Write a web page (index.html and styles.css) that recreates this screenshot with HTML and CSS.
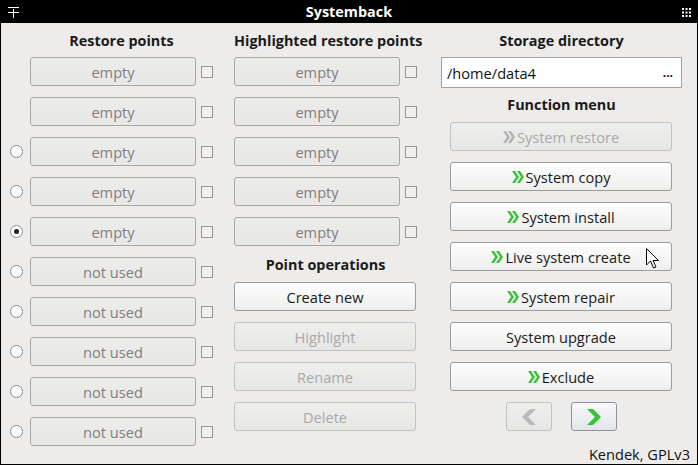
FILE: index.html
```html
<!DOCTYPE html>
<html>
<head>
<meta charset="utf-8">
<link rel="stylesheet" href="styles.css">
</head>
<body>
<div class="window">
  <div class="titlebar">
    <svg class="tb-left" width="11" height="11" viewBox="0 0 11 11"><path d="M0 0.5H11M0 5.5H11M5.5 2V11" stroke="#fff" stroke-width="1"/></svg>
    <span class="title">Systemback</span>
    <svg class="tb-right" width="9" height="9" viewBox="0 0 9 9" fill="#fff"><rect x="0" y="0" width="2" height="2"/><rect x="3.5" y="0" width="2" height="2"/><rect x="7" y="0" width="2" height="2"/><rect x="0" y="3.5" width="2" height="2"/><rect x="3.5" y="3.5" width="2" height="2"/><rect x="7" y="3.5" width="2" height="2"/><rect x="0" y="7" width="2" height="2"/><rect x="3.5" y="7" width="2" height="2"/><rect x="7" y="7" width="2" height="2"/></svg>
  </div>
  <div class="content">
    <div class="col col-left">
      <div class="heading h-left">Restore points</div>
      <div class="rows">
        <div class="row"><span class="radio hidden"></span><div class="field">empty</div><span class="check"></span></div>
        <div class="row"><span class="radio hidden"></span><div class="field">empty</div><span class="check"></span></div>
        <div class="row"><span class="radio"></span><div class="field">empty</div><span class="check"></span></div>
        <div class="row"><span class="radio"></span><div class="field">empty</div><span class="check"></span></div>
        <div class="row"><span class="radio checked"></span><div class="field">empty</div><span class="check"></span></div>
        <div class="row"><span class="radio"></span><div class="field">not used</div><span class="check"></span></div>
        <div class="row"><span class="radio"></span><div class="field">not used</div><span class="check"></span></div>
        <div class="row"><span class="radio"></span><div class="field">not used</div><span class="check"></span></div>
        <div class="row"><span class="radio"></span><div class="field">not used</div><span class="check"></span></div>
        <div class="row"><span class="radio"></span><div class="field">not used</div><span class="check"></span></div>
      </div>
    </div>
    <div class="col col-mid">
      <div class="heading h-mid">Highlighted restore points</div>
      <div class="rows">
        <div class="row"><div class="field">empty</div><span class="check"></span></div>
        <div class="row"><div class="field">empty</div><span class="check"></span></div>
        <div class="row"><div class="field">empty</div><span class="check"></span></div>
        <div class="row"><div class="field">empty</div><span class="check"></span></div>
        <div class="row"><div class="field">empty</div><span class="check"></span></div>
      </div>
      <div class="heading h-mid h-ops">Point operations</div>
      <div class="rows">
        <div class="btn op">Create new</div>
        <div class="btn op disabled">Highlight</div>
        <div class="btn op disabled">Rename</div>
        <div class="btn op disabled">Delete</div>
      </div>
    </div>
    <div class="col col-right">
      <div class="heading h-right">Storage directory</div>
      <div class="dir"><span>/home/data4</span><span class="dots">...</span></div>
      <div class="heading h-right h-func">Function menu</div>
      <div class="rows">
        <div class="btn fn disabled"><svg class="chev" width="12" height="12" viewBox="0 0 12 12"><path d="M0 0H3L7 6L3 12H0L4 6Z M5 0H8L12 6L8 12H5L9 6Z" fill="#b4b4b4"/></svg>System restore</div>
        <div class="btn fn"><svg class="chev" width="12" height="12" viewBox="0 0 12 12"><path d="M0 0H3L7 6L3 12H0L4 6Z M5 0H8L12 6L8 12H5L9 6Z" fill="#3cc13c"/></svg>System copy</div>
        <div class="btn fn"><svg class="chev" width="12" height="12" viewBox="0 0 12 12"><path d="M0 0H3L7 6L3 12H0L4 6Z M5 0H8L12 6L8 12H5L9 6Z" fill="#3cc13c"/></svg>System install</div>
        <div class="btn fn"><svg class="chev" width="12" height="12" viewBox="0 0 12 12"><path d="M0 0H3L7 6L3 12H0L4 6Z M5 0H8L12 6L8 12H5L9 6Z" fill="#3cc13c"/></svg>Live system create</div>
        <div class="btn fn"><svg class="chev" width="12" height="12" viewBox="0 0 12 12"><path d="M0 0H3L7 6L3 12H0L4 6Z M5 0H8L12 6L8 12H5L9 6Z" fill="#3cc13c"/></svg>System repair</div>
        <div class="btn fn">System upgrade</div>
        <div class="btn fn"><svg class="chev" width="12" height="12" viewBox="0 0 12 12"><path d="M0 0H3L7 6L3 12H0L4 6Z M5 0H8L12 6L8 12H5L9 6Z" fill="#3cc13c"/></svg>Exclude</div>
        <div class="nav">
          <div class="btn navbtn disabled"><svg width="14" height="16" viewBox="0 0 14 16"><path d="M14 0H8L0 8L8 16H14L6 8Z" fill="#b9b9b9"/></svg></div>
          <div class="btn navbtn fwd"><svg width="14" height="16" viewBox="0 0 14 16"><path d="M0 0H6L14 8L6 16H0L8 8Z" fill="#33c433"/></svg></div>
        </div>
      </div>
      <div class="footer">Kendek, GPLv3</div>
    </div>
  </div>
  <svg class="cursor" width="13" height="21" viewBox="0 0 13 21"><path d="M0.5 0.5V17L4.5 13L7.5 20L10 19L7 12.5H12.5Z" fill="#fff" stroke="#000" stroke-width="1" stroke-linejoin="round"/></svg>
</div>
</body>
</html>
```

FILE: styles.css
```css
* { box-sizing: border-box; }
html, body { margin: 0; padding: 0; }
body {
  width: 698px;
  height: 465px;
  overflow: hidden;
  font-family: "Open Sans", "Liberation Sans", sans-serif;
  font-size: 14.6px;
  color: #1a1a1a;
  background: #edeceb;
}
.window {
  position: relative;
  width: 698px;
  height: 465px;
  border: 1px solid #000;
  border-top: 0;
  background: #edeceb;
}
.titlebar {
  position: relative;
  height: 23px;
  margin: 0 -1px;
  background: #000;
  color: #fff;
  display: flex;
  align-items: center;
  justify-content: center;
}
.title { font-weight: bold; font-size: 14.4px; }
.tb-left { position: absolute; left: 8px; top: 7px; }
.tb-right { position: absolute; right: 7px; top: 8px; }
.content {
  display: flex;
  padding-top: 8px;
}
.col { display: flex; flex-direction: column; }
.col-left { width: 217px; }
.col-mid { width: 212px; padding-left: 16px; }
.col-right { width: 267px; }
.heading {
  height: 20px;
  line-height: 20px;
  font-weight: bold;
  font-size: 14.4px;
  text-align: center;
  white-space: nowrap;
  margin-bottom: 6px;
}
.h-left { margin-left: 29px; width: 183px; }
.h-mid { width: 183px; }
.h-ops { margin-top: 9px; margin-bottom: 7px; }
.h-right { margin-left: 11px; width: 241px; }
.h-func { margin-top: 7px; margin-bottom: 7px; }
.rows { display: flex; flex-direction: column; gap: 11px; }
.row { display: flex; align-items: center; height: 29px; }
.radio {
  width: 13px;
  height: 13px;
  margin-left: 9px;
  margin-right: 7px;
  border: 1px solid #8c8c8c;
  border-radius: 50%;
  background: #fff;
  display: flex;
  align-items: center;
  justify-content: center;
}
.radio.hidden { visibility: hidden; }
.radio.checked::after {
  content: "";
  width: 5px;
  height: 5px;
  border-radius: 50%;
  background: #222;
}
.field {
  width: 166px;
  height: 29px;
  border: 1px solid #a6a6a6;
  border-radius: 3px;
  background: linear-gradient(#ececeb, #e8e7e6);
  color: #7e7e7e;
  text-align: center;
  line-height: 27px;
  padding-top: 1px;
}
.check {
  width: 12px;
  height: 12px;
  margin-left: 5px;
  border: 1px solid #969696;
  background: #f1f0ef;
}
.btn {
  height: 29px;
  border: 1px solid #9d9d9d;
  border-radius: 3px;
  background: linear-gradient(#fefefe, #eeeeed);
  display: flex;
  align-items: center;
  justify-content: center;
  color: #1a1a1a;
  white-space: nowrap;
}
.btn.disabled {
  border-color: #c2c2c2;
  background: linear-gradient(#eeeeed, #e6e6e5);
  color: #a9a9a9;
}
.op { width: 182px; }
.fn { width: 222px; margin-left: 20px; }
.chev { margin-right: 2px; }
.dir {
  margin-left: 11px;
  width: 241px;
  height: 31px;
  background: #fff;
  border: 1px solid #a3a3a3;
  display: flex;
  align-items: center;
  justify-content: space-between;
  padding: 0 8px 0 5px;
  color: #111;
}
.dots { font-weight: bold; font-size: 12px; }
.nav {
  display: flex;
  gap: 19px;
  margin-left: 76px;
}
.navbtn { width: 46px; }
.navbtn.fwd { background: linear-gradient(#f7f9fb, #e3e6ea); border-color: #8e9399; }
.footer {
  margin-top: 13px;
  padding-right: 7px;
  text-align: right;
  line-height: 20px;
  color: #111;
}
.cursor { position: absolute; left: 645px; top: 248px; }
```
